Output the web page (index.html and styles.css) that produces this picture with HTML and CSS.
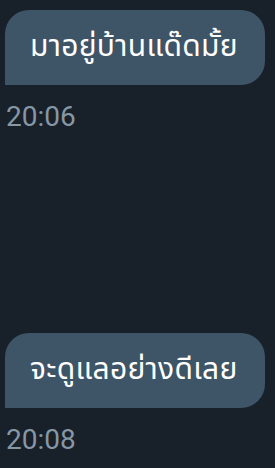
FILE: index.html
```html
<!DOCTYPE html>
<html lang="th">
<head>
<meta charset="utf-8">
<link rel="stylesheet" href="styles.css">
</head>
<body>
<div class="chat">
  <div class="msg">
    <div class="bubble">มาอยู่บ้านแด๊ดมั้ย</div>
    <div class="time">20:06</div>
  </div>
  <div class="msg msg-late">
    <div class="bubble">จะดูแลอย่างดีเลย</div>
    <div class="time">20:08</div>
  </div>
</div>
</body>
</html>
```
FILE: styles.css
```css
html, body {
  margin: 0;
  padding: 0;
  background: #18202a;
  height: 100%;
}
.chat {
  display: flex;
  flex-direction: column;
  padding: 10px 0 0 5px;
  font-family: "Noto Sans Thai", "Noto Sans", Roboto, "DejaVu Sans", sans-serif;
}
.msg {
  display: flex;
  flex-direction: column;
  align-items: flex-start;
}
.msg-late {
  margin-top: 201px;
}
.bubble {
  background: #3e5467;
  color: #ffffff;
  font-size: 30px;
  letter-spacing: 0.3px;
  line-height: 75px;
  height: 75px;
  padding: 0 27px 0 25px;
  border-radius: 24px 24px 24px 0;
  white-space: nowrap;
}
.time {
  font-family: Roboto, "Noto Sans", sans-serif;
  color: #8697a5;
  font-size: 28px;
  line-height: 30px;
  margin-top: 17px;
  padding-left: 1px;
}
```
